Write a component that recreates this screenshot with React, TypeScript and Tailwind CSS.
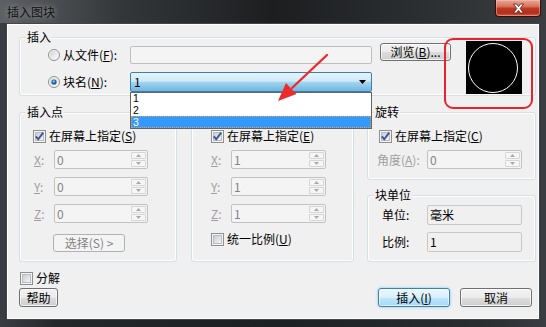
import type { ReactNode } from 'react';
import clsx from 'clsx';

// ── Small pieces ──────────────────────────────────────────────────────

function Key({ k }: { k: string }) {
  return <span className="underline underline-offset-[1px]">{k}</span>;
}

function Radio({ selected }: { selected?: boolean }) {
  return (
    <svg width="12" height="12" viewBox="0 0 12 12" className="shrink-0">
      <defs>
        <radialGradient id="rdot" cx="0.45" cy="0.4" r="0.6">
          <stop offset="0" stopColor="#8fd0f5" />
          <stop offset="0.55" stopColor="#2a6fb0" />
          <stop offset="1" stopColor="#123a66" />
        </radialGradient>
        <linearGradient id="rbg" x1="0" y1="0" x2="1" y2="1">
          <stop offset="0" stopColor="#d0d3d6" />
          <stop offset="1" stopColor="#fbfbfb" />
        </linearGradient>
      </defs>
      <circle cx="6" cy="6" r="5.5" fill="#f4f4f4" stroke="#8e8f8f" />
      <circle cx="6" cy="6" r="4" fill="url(#rbg)" />
      {selected && <circle cx="6" cy="6" r="2.6" fill="url(#rdot)" />}
    </svg>
  );
}

function Check({ checked }: { checked?: boolean }) {
  return (
    <svg width="13" height="13" viewBox="0 0 13 13" className="shrink-0">
      <defs>
        <linearGradient id="cbg" x1="0" y1="0" x2="1" y2="1">
          <stop offset="0" stopColor="#c6cacf" />
          <stop offset="1" stopColor="#f6f6f6" />
        </linearGradient>
      </defs>
      <rect x="0.5" y="0.5" width="12" height="12" fill="#f4f4f4" stroke="#8e8f8f" />
      <rect x="2.5" y="2.5" width="8" height="8" fill="url(#cbg)" stroke="#b9bdc2" />
      {checked && (
        <path d="M2.8 6.4 L5.2 9.2 L10.2 2.6" fill="none" stroke="#3f5596" strokeWidth="1.9" />
      )}
    </svg>
  );
}

function Button({
  children,
  className,
  primary,
  disabled,
}: {
  children: ReactNode;
  className?: string;
  primary?: boolean;
  disabled?: boolean;
}) {
  return (
    <div
      className={clsx(
        'flex items-center justify-center rounded-[3px] border leading-[14px]',
        primary
          ? 'border-[#3c7fb1] bg-[linear-gradient(#eaf6fd,#d9f0fc_50%,#bee6fd_50%,#a7d9f5)] shadow-[inset_0_0_0_1px_rgba(255,255,255,0.6),0_0_3px_#7cc4f4]'
          : disabled
          ? 'border-[#adb2b5] bg-[#f4f4f4] text-[#838383]'
          : 'border-[#707070] bg-[linear-gradient(#f2f2f2,#ebebeb_50%,#dddddd_50%,#cfcfcf)] shadow-[inset_0_0_0_1px_rgba(255,255,255,0.7)]',
        className,
      )}
    >
      {children}
    </div>
  );
}

function Group({
  label,
  className,
  children,
}: {
  label: string;
  className?: string;
  children?: ReactNode;
}) {
  return (
    <div
      className={clsx(
        'relative rounded-[3px] border border-[#d5dfe5] shadow-[inset_0_0_0_1px_#ffffff]',
        className,
      )}
    >
      <span className="absolute -top-[8px] left-[6px] bg-[#f0f0f0] px-[1px] leading-[14px]">
        {label}
      </span>
      {children}
    </div>
  );
}

function Arrow({ up }: { up?: boolean }) {
  return (
    <svg width="5" height="3" viewBox="0 0 5 3">
      <path d={up ? 'M0 3 L2.5 0 L5 3 Z' : 'M0 0 L2.5 3 L5 0 Z'} fill="#a9a9a9" />
    </svg>
  );
}

function SpinField({ value, width }: { value: string; width: string }) {
  return (
    <div
      className={clsx(
        'flex h-[19px] items-stretch rounded-[2px] border border-[#c2c2c2] bg-[#f4f4f4]',
        width,
      )}
    >
      <span className="flex-1 pl-[2px] leading-[17px] text-[#838383]">{value}</span>
      <div className="flex w-[16px] flex-col gap-[1px] py-[1px] pr-[1px]">
        <div className="flex flex-1 items-center justify-center rounded-[1px] border border-[#d6d6d6] bg-[#f6f6f6]">
          <Arrow up />
        </div>
        <div className="flex flex-1 items-center justify-center rounded-[1px] border border-[#d6d6d6] bg-[#f6f6f6]">
          <Arrow />
        </div>
      </div>
    </div>
  );
}

function AxisRow({
  axis,
  value,
  pad,
  width,
  className,
}: {
  axis: string;
  value: string;
  pad: string;
  width: string;
  className?: string;
}) {
  return (
    <div className={clsx('flex h-[19px] items-center', pad, className)}>
      <span className="w-[20px] text-[#a0a0a0]">
        <Key k={axis} />:
      </span>
      <SpinField value={value} width={width} />
    </div>
  );
}

function CheckRow({ checked, children, className }: { checked?: boolean; children: ReactNode; className?: string }) {
  return (
    <div className={clsx('flex h-[14px] items-center gap-[3px]', className)}>
      <Check checked={checked} />
      <span className="leading-[14px]">{children}</span>
    </div>
  );
}

// ── Dialog ────────────────────────────────────────────────────────────

export default function App() {
  return (
    <div className="relative h-[327px] w-[546px] overflow-hidden bg-[linear-gradient(90deg,#3a3e42,#24272a_10%,#1d2022_50%,#2a2e31_90%,#3a3e42)] font-['Noto_Sans_CJK_SC','Noto_Sans',sans-serif] text-[12px] leading-[14px] text-black">
      {/* Title bar */}
      <div className="flex h-[23px] items-start bg-[linear-gradient(90deg,#5d6064,#34373a_22%,#1c1e20_50%,#2c2f32_78%,#3b3e41)]">
        <span className="pl-[7px] pt-[5px] leading-[14px] text-[#111] [text-shadow:0_0_6px_rgba(255,255,255,0.55)]">
          插入图块
        </span>
        <div className="ml-auto mr-[5px] flex h-[17px] w-[46px] items-center justify-center rounded-b-[4px] border border-t-0 border-[#3b0d06] bg-[linear-gradient(#e8a898,#d8735e_40%,#c23a22_52%,#b0301c_80%,#d9563a)] shadow-[inset_0_0_0_1px_rgba(255,200,190,0.45)]">
          <svg width="13" height="11" viewBox="0 0 13 11">
            <path
              d="M1.5 1 L4.5 1 L6.5 3.6 L8.5 1 L11.5 1 L8.2 5.5 L11.5 10 L8.5 10 L6.5 7.4 L4.5 10 L1.5 10 L4.8 5.5 Z"
              fill="#ffffff"
              stroke="#4a1a12"
              strokeWidth="0.8"
            />
          </svg>
        </div>
      </div>

      {/* Client area */}
      <div className="mx-[6px] h-[297px] border border-[#40464b] bg-[#f0f0f0] shadow-[inset_0_0_0_1px_#ffffff]">
        {/* 插入 */}
        <Group label="插入" className="ml-[12px] mt-[13px] h-[59px] w-[517px]">
          <div className="flex items-start">
            <div className="flex w-[352px] flex-col gap-[8px] pt-[8px]">
              <div className="flex h-[18px] items-center pl-[28px]">
                <Radio />
                <span className="ml-[3px]">
                  从文件(<Key k="F" />):
                </span>
                <div className="ml-auto h-[18px] w-[242px] rounded-[2px] border border-[#bfbfbf] bg-[#f4f4f4]" />
              </div>
              <div className="flex h-[20px] items-center pl-[28px]">
                <Radio selected />
                <span className="ml-[3px]">
                  块名(<Key k="N" />):
                </span>
                <div className="ml-auto flex h-[20px] w-[242px] items-center rounded-[2px] border border-[#3c7fb1] bg-[linear-gradient(#e5f4fc,#cfeaf8_45%,#a3d5f0_52%,#6fb6de)] pl-[3px] pr-[5px]">
                  <span className="flex-1">1</span>
                  <svg width="7" height="4" viewBox="0 0 7 4">
                    <path d="M0 0 L7 0 L3.5 4 Z" fill="#000" />
                  </svg>
                </div>
              </div>
            </div>
            <Button className="ml-[8px] mt-[5px] h-[18px] w-[71px]">
              浏览(<Key k="B" />)...
            </Button>
            <div className="ml-[15px] mt-[3px] flex h-[53px] w-[56px] items-center justify-center bg-black">
              <svg width="52" height="52" viewBox="0 0 52 52">
                <circle cx="25" cy="26" r="24.5" fill="none" stroke="#ffffff" strokeWidth="1" />
              </svg>
            </div>
          </div>
        </Group>

        {/* Middle row */}
        <div className="mt-[16px] flex h-[150px] pl-[12px]">
          <Group label="插入点" className="h-[150px] w-[158px]">
            <CheckRow checked className="mt-[16px] pl-[13px]">
              在屏幕上指定(<Key k="S" />)
            </CheckRow>
            <AxisRow axis="X" value="0" pad="pl-[14px]" width="w-[94px]" className="mt-[7px]" />
            <AxisRow axis="Y" value="0" pad="pl-[14px]" width="w-[94px]" className="mt-[8px]" />
            <AxisRow axis="Z" value="0" pad="pl-[14px]" width="w-[94px]" className="mt-[8px]" />
            <Button disabled className="ml-[33px] mt-[11px] h-[18px] w-[72px]">
              选择(S) &gt;
            </Button>
          </Group>

          <Group label="比例" className="ml-[14px] h-[150px] w-[163px]">
            <CheckRow checked className="mt-[16px] pl-[19px]">
              在屏幕上指定(<Key k="E" />)
            </CheckRow>
            <AxisRow axis="X" value="1" pad="pl-[19px]" width="w-[95px]" className="mt-[7px]" />
            <AxisRow axis="Y" value="1" pad="pl-[19px]" width="w-[95px]" className="mt-[8px]" />
            <AxisRow axis="Z" value="1" pad="pl-[19px]" width="w-[95px]" className="mt-[8px]" />
            <CheckRow className="mt-[9px] pl-[19px]">
              统一比例(<Key k="U" />)
            </CheckRow>
          </Group>

          <div className="ml-[13px] flex w-[169px] flex-col">
            <Group label="旋转" className="h-[68px]">
              <CheckRow checked className="mt-[16px] pl-[11px]">
                在屏幕上指定(<Key k="C" />)
              </CheckRow>
              <div className="mt-[7px] flex h-[19px] items-center pl-[9px]">
                <span className="w-[50px] text-[#a0a0a0]">
                  角度(<Key k="A" />):
                </span>
                <SpinField value="0" width="w-[95px]" />
              </div>
            </Group>
            <Group label="块单位" className="mt-[15px] h-[67px]">
              <div className="mt-[9px] flex h-[20px] items-center pl-[14px]">
                <span className="w-[45px]">单位:</span>
                <div className="flex h-[20px] w-[95px] items-center rounded-[2px] border border-[#c8c8c8] bg-[#f0f0f0] pl-[2px]">
                  毫米
                </div>
              </div>
              <div className="mt-[7px] flex h-[20px] items-center pl-[14px]">
                <span className="w-[45px]">比例:</span>
                <div className="flex h-[20px] w-[95px] items-center rounded-[2px] border border-[#c8c8c8] bg-[#f0f0f0] pl-[2px]">
                  1
                </div>
              </div>
            </Group>
          </div>
        </div>

        {/* 分解 */}
        <CheckRow className="ml-[13px] mt-[9px]">分解</CheckRow>

        {/* Buttons */}
        <div className="mt-[3px] flex h-[19px] pl-[12px] pr-[7px]">
          <Button className="w-[39px]">帮助</Button>
          <Button primary className="ml-auto w-[72px]">
            插入(<Key k="I" />)
          </Button>
          <Button className="ml-[10px] w-[72px]">取消</Button>
        </div>
      </div>

      {/* Dropdown list (open) */}
      <div className="absolute left-[130px] top-[92px] w-[242px] border border-[#646464] bg-white font-['Liberation_Sans',sans-serif] text-[10.5px]">
        <div className="flex h-[11px] items-center pl-[2px]">
          <span className="leading-[11px]">1</span>
        </div>
        <div className="flex h-[12px] items-center pl-[2px]">
          <span className="leading-[12px]">2</span>
        </div>
        <div className="flex h-[12px] items-center border border-dotted border-[#e0a050] bg-[#3399ff] pl-[1px] text-white">
          <span className="leading-[10px]">3</span>
        </div>
      </div>

      {/* Annotation: red frame round the preview */}
      <div className="absolute left-[444px] top-[38px] h-[71px] w-[89px] rounded-[9px] border-2 border-[#e8232c]" />

      {/* Annotation: red arrow */}
      <svg className="pointer-events-none absolute left-0 top-0" width="546" height="327" viewBox="0 0 546 327">
        <line x1="327" y1="55" x2="292" y2="88" stroke="#ec2b2b" strokeWidth="2.4" strokeLinecap="round" />
        <path d="M278 101 L296.5 94 L291 88.5 L286 83 Z" fill="#ec2b2b" />
      </svg>
    </div>
  );
}
